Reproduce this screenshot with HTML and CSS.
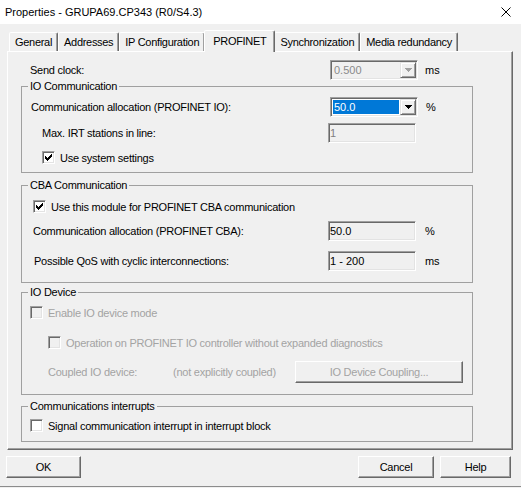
FILE: index.html
```html
<!DOCTYPE html>
<html>
<head>
<meta charset="utf-8">
<link rel="stylesheet" href="styles.css">
</head>
<body>
<div class="window">
  <div class="titlebar">
    <span class="title">Properties - GRUPA69.CP343 (R0/S4.3)</span>
    <svg class="close" width="10" height="10" viewBox="0 0 10 10"><path d="M0.5 0.5L9.5 9.5M9.5 0.5L0.5 9.5" stroke="#000" stroke-width="1" fill="none"/></svg>
  </div>
  <div class="tabs">
    <div class="tab">General</div>
    <div class="tab">Addresses</div>
    <div class="tab">IP Configuration</div>
    <div class="tab active">PROFINET</div>
    <div class="tab">Synchronization</div>
    <div class="tab">Media redundancy</div>
  </div>
  <div class="panel">
    <div class="sendrow">
      <span class="lbl pad-send">Send clock:</span>
      <div class="combo disabled"><span class="val">0.500</span><span class="arrow"><svg width="7" height="4" viewBox="0 0 7 4"><path d="M0 0h7v1h-1v1h-1v1h-1v1h-1v-1h-1v-1h-1v-1h-1z" fill="#a0a0a0"/></svg></span></div>
      <span class="unit">ms</span>
    </div>

    <fieldset class="group g-io">
      <legend>IO Communication</legend>
      <div class="gbody">
        <div class="frow combo-row">
          <span class="lbl pad-9">Communication allocation (PROFINET IO):</span>
          <div class="combo"><span class="val"><span class="sel">50.0</span></span><span class="arrow"><svg width="7" height="4" viewBox="0 0 7 4"><path d="M0 0h7v1h-1v1h-1v1h-1v1h-1v-1h-1v-1h-1v-1h-1z" fill="#000"/></svg></span></div>
          <span class="unit">%</span>
        </div>
        <div class="frow field-row m6">
          <span class="lbl pad-20">Max. IRT stations in line:</span>
          <div class="field dis">1</div>
          <span class="unit"></span>
        </div>
        <div class="cbrow m7 pad-20">
          <span class="cb"><svg width="7" height="7" viewBox="0 0 7 7"><path d="M0 2h1v3H0z M1 3h1v3H1z M2 4h1v3H2z M3 3h1v3H3z M4 2h1v3H4z M5 1h1v3H5z M6 0h1v3H6z" fill="#000"/></svg></span>
          <span>Use system settings</span>
        </div>
      </div>
    </fieldset>

    <fieldset class="group g-cba">
      <legend>CBA Communication</legend>
      <div class="gbody">
        <div class="cbrow pad-11">
          <span class="cb"><svg width="7" height="7" viewBox="0 0 7 7"><path d="M0 2h1v3H0z M1 3h1v3H1z M2 4h1v3H2z M3 3h1v3H3z M4 2h1v3H4z M5 1h1v3H5z M6 0h1v3H6z" fill="#000"/></svg></span>
          <span>Use this module for PROFINET CBA communication</span>
        </div>
        <div class="frow field-row m7">
          <span class="lbl pad-11">Communication allocation (PROFINET CBA):</span>
          <div class="field">50.0</div>
          <span class="unit">%</span>
        </div>
        <div class="frow field-row m10">
          <span class="lbl pad-12">Possible QoS with cyclic interconnections:</span>
          <div class="field">1 - 200</div>
          <span class="unit">ms</span>
        </div>
      </div>
    </fieldset>

    <fieldset class="group g-dev">
      <legend>IO Device</legend>
      <div class="gbody">
        <div class="cbrow pad-8 disabled-text">
          <span class="cb off"></span>
          <span>Enable IO device mode</span>
        </div>
        <div class="cbrow pad-26 m15 disabled-text">
          <span class="cb off"></span>
          <span>Operation on PROFINET IO controller without expanded diagnostics</span>
        </div>
        <div class="couprow m11 disabled-text">
          <span class="lbl pad-26">Coupled IO device:</span>
          <span>(not explicitly coupled)</span>
          <button class="btn wide disabled-text">IO Device Coupling...</button>
        </div>
      </div>
    </fieldset>

    <fieldset class="group g-int">
      <legend>Communications interrupts</legend>
      <div class="gbody">
        <div class="cbrow pad-8">
          <span class="cb"></span>
          <span>Signal communication interrupt in interrupt block</span>
        </div>
      </div>
    </fieldset>
  </div>

  <div class="buttons">
    <button class="btn ok">OK</button>
    <span class="spacer"></span>
    <button class="btn cancel">Cancel</button>
    <button class="btn help">Help</button>
  </div>
</div>
</body>
</html>
```
FILE: styles.css
```css
* { box-sizing: border-box; }
html, body { margin: 0; padding: 0; }
body {
  width: 521px;
  height: 488px;
  overflow: hidden;
  background: #f0f0f0;
  font-family: "Liberation Sans", Arial, sans-serif;
  font-size: 11px;
  color: #000;
}
.window {
  height: 487px;
  border-bottom: 1px solid #8c8c8c;
}
.titlebar {
  height: 24px;
  background: #fff;
  display: flex;
  align-items: center;
  justify-content: space-between;
  padding: 0 10px 0 5px;
}
.title { line-height: 13px; }
.close { display: block; }

.tabs {
  display: flex;
  align-items: flex-end;
  height: 22px;
  margin-top: 6px;
  padding-left: 9px;
}
.tab {
  height: 19px;
  margin-bottom: 1px;
  padding: 0 5px;
  display: flex;
  align-items: center;
  justify-content: center;
  white-space: nowrap;
  letter-spacing: -0.3px;
  border: 1px solid;
  border-bottom: none;
  border-color: #fff #696969 transparent #fff;
  box-shadow: inset -1px 0 0 #a0a0a0;
  background: #f0f0f0;
  border-radius: 2px 2px 0 0;
}
.tab.active {
  height: 22px;
  margin: 0 -1px;
  padding: 0 8px 2px;
  position: relative;
  z-index: 1;
}

.panel {
  margin: -1px 0 0 7px;
  width: 506px;
  height: 399px;
  border: 1px solid;
  border-color: #fff #696969 #696969 #fff;
  box-shadow: inset -1px -1px 0 #a0a0a0;
  padding-top: 8px;
}
.lbl { letter-spacing: -0.25px; white-space: nowrap; line-height: 13px; }
.sendrow {
  display: grid;
  grid-template-columns: 315px 88px auto;
  column-gap: 7px;
  align-items: center;
  height: 20px;
}
.pad-send { padding-left: 22px; }
.unit { line-height: 13px; }

.group {
  margin: 0 0 0 13px;
  padding: 0;
  width: 452px;
  border: 1px solid #a0a0a0;
  min-inline-size: 0;
}
.group legend {
  margin-left: 6px;
  padding: 0 2px;
  line-height: 13px;
  letter-spacing: -0.25px;
}
.g-io { margin-top: 0; }
.g-cba { margin-top: 6px; }
.g-dev { margin-top: 3px; }
.g-int { margin-top: 5px; }

.gbody { display: flex; flex-direction: column; letter-spacing: -0.25px; }
.g-io .gbody { padding: 4px 0 7px; }
.g-cba .gbody { padding: 7px 0 11px; }
.g-dev .gbody { padding: 6px 0 11px; }
.g-int .gbody { padding: 5px 0 8px; }

.m6 { margin-top: 6px; }
.m7 { margin-top: 7px; }
.m10 { margin-top: 10px; }
.m11 { margin-top: 11px; }
.m15 { margin-top: 15px; }
.pad-8 { padding-left: 8px; }
.pad-9 { padding-left: 9px; }
.pad-11 { padding-left: 11px; }
.pad-12 { padding-left: 12px; }
.pad-20 { padding-left: 20px; }
.pad-26 { padding-left: 26px; }

.frow {
  display: grid;
  align-items: center;
}
.combo-row { grid-template-columns: 300px 88px auto; column-gap: 8px; height: 20px; }
.field-row { grid-template-columns: 297px 88px auto; column-gap: 9px; height: 20px; }

.combo, .field {
  height: 20px;
  width: 88px;
  border: 1px solid;
  border-color: #a0a0a0 #fff #fff #a0a0a0;
  box-shadow: inset 1px 1px 0 #696969, inset -1px -1px 0 #e3e3e3;
}
.combo {
  display: flex;
  padding: 1px;
  background: #fff;
}
.combo.disabled { background: #f0f0f0; }
.combo .val {
  flex: 1;
  display: flex;
  padding: 1px;
  line-height: 14px;
  letter-spacing: 0;
}
.combo.disabled .val { color: #8a8a8a; padding-left: 2px; }
.combo .sel {
  flex: 1;
  background: #0078d7;
  color: #fff;
  padding-left: 1px;
}
.arrow {
  width: 16px;
  height: 16px;
  display: flex;
  align-items: center;
  justify-content: center;
  border: 1px solid;
  border-color: #e3e3e3 #696969 #696969 #e3e3e3;
  box-shadow: inset 1px 1px 0 #fff, inset -1px -1px 0 #a0a0a0;
  background: #f0f0f0;
}
.arrow svg { display: block; }
.field {
  background: #f0f0f0;
  padding: 1px 2px 1px 1px;
  line-height: 16px;
  letter-spacing: 0;
}
.field.dis { color: #808080; }

.cbrow {
  display: flex;
  align-items: center;
  gap: 5px;
  height: 15px;
  white-space: nowrap;
}
.cb {
  width: 13px;
  height: 13px;
  flex: none;
  display: flex;
  align-items: center;
  justify-content: center;
  border: 1px solid;
  border-color: #a0a0a0 #fff #fff #a0a0a0;
  box-shadow: inset 1px 1px 0 #696969, inset -1px -1px 0 #e3e3e3;
  background: #fff;
}
.cb.off { background: #f0f0f0; }
.cb svg { display: block; }

.disabled-text { color: #a3a3a3; }

.couprow {
  display: grid;
  grid-template-columns: 151px 122px 168px;
  align-items: center;
  height: 22px;
  white-space: nowrap;
}

.btn {
  height: 22px;
  padding: 0;
  margin: 0;
  font: inherit;
  color: #000;
  background: #f0f0f0;
  border: 1px solid;
  border-color: #fff #696969 #696969 #fff;
  box-shadow: inset -1px -1px 0 #a0a0a0;
  letter-spacing: -0.25px;
}
.btn.wide { width: 168px; color: #a3a3a3; }

.buttons {
  display: flex;
  margin-top: 6px;
  padding: 0 10px 0 6px;
}
.spacer { flex: 1; }
.ok { width: 75px; }
.cancel { width: 76px; }
.help { width: 71px; margin-left: 6px; }
```
